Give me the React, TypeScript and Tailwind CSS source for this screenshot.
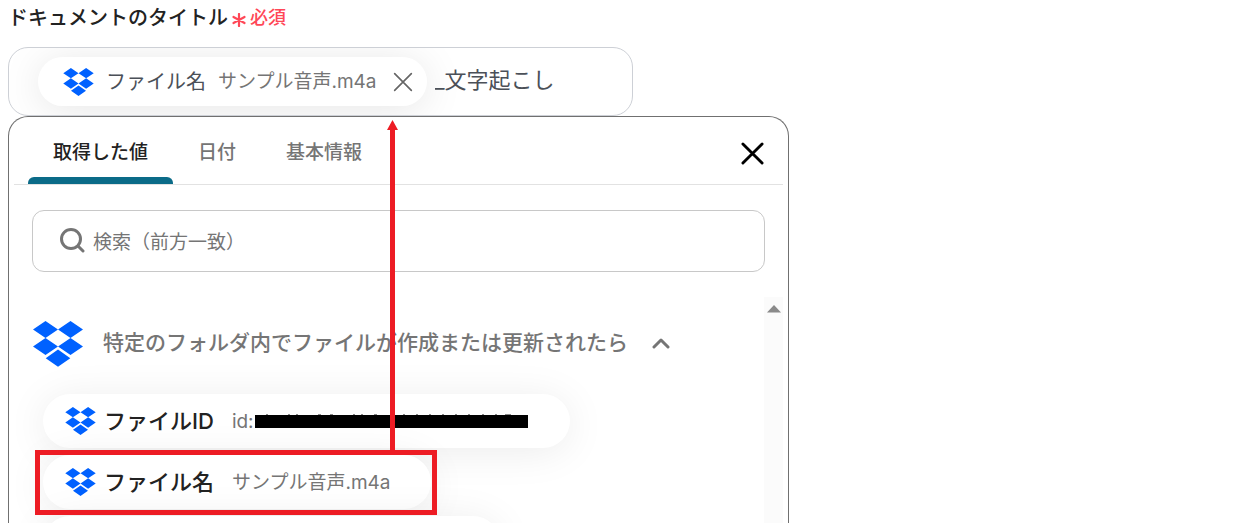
import { useState } from "react";

function DropboxIcon({ className }: { className: string }) {
  return (
    <svg viewBox="0 0 50 46" className={className} fill="#0061ff" aria-hidden="true">
      <path d="M12.5 0 25 8.5 12.5 17 0 8.5ZM37.5 0 50 8.5 37.5 17 25 8.5ZM12.5 17 25 25.5 12.5 34 0 25.5ZM37.5 17 50 25.5 37.5 34 25 25.5ZM25 28.6 37.3 37.2 25 45.8 12.7 37.2Z" />
    </svg>
  );
}

function CrossIcon({ className, stroke }: { className: string; stroke: number }) {
  return (
    <svg viewBox="0 0 24 24" className={className} fill="none" stroke="currentColor" strokeWidth={stroke} strokeLinecap="round" aria-hidden="true">
      <path d="M2 2 22 22M22 2 2 22" />
    </svg>
  );
}

const tabs = ["取得した値", "日付", "基本情報"];

export default function App() {
  const [active, setActive] = useState(0);
  const [suffix, setSuffix] = useState("_文字起こし");

  return (
    <main className="flex h-screen flex-col overflow-hidden bg-white px-2 font-['Inter','Noto_Sans_CJK_JP',sans-serif] text-[#757575]">
      <div className="flex h-[47px] shrink-0 items-start gap-1 pt-1">
        <label htmlFor="title" className="text-[20px] leading-7 font-medium text-[#222]">
          ドキュメントのタイトル
        </label>
        <span className="flex items-center gap-1 text-[18px] leading-7 font-medium text-[#ff4757]">
          <svg viewBox="0 0 14 14" className="mt-1 h-[14px] w-[14px]" fill="none" stroke="currentColor" strokeWidth="2.2" strokeLinecap="round" aria-hidden="true">
            <path d="M7 1V13M1.5 4 12.5 10M12.5 4 1.5 10" />
          </svg>
          必須
        </span>
      </div>

      <div className="flex h-[69px] w-full max-w-[625px] shrink-0 items-center gap-2 overflow-hidden rounded-[20px] border border-[#cdd0d6] pl-[29px]">
        <div className="flex h-[49px] shrink-0 items-center rounded-full bg-white pr-[14px] pl-[25px] shadow-[0_4px_40px_rgba(0,0,0,0.1)]">
          <DropboxIcon className="h-[28px] w-[31px]" />
          <span className="ml-3 text-[20px] leading-8 text-[#4b5058]">ファイル名</span>
          <span className="ml-3 text-[19px] leading-8">サンプル音声.m4a</span>
          <button type="button" aria-label="削除" className="ml-4 text-[#666]">
            <CrossIcon className="h-[20px] w-[20px]" stroke={2} />
          </button>
        </div>
        <input id="title" value={suffix} onChange={(e) => setSuffix(e.target.value)} className="min-w-0 flex-1 bg-transparent pb-[3px] text-[22px] text-[#4b5058] outline-none" />
      </div>

      <section className="relative flex min-h-0 w-full max-w-[781px] flex-1 flex-col rounded-t-[20px] border border-b-0 border-[#707070] px-[5px]">
        <div className="flex h-[68px] shrink-0 items-stretch justify-between border-b border-[#e2e2e2] pr-[19px] pl-[14px]">
          <div role="tablist" className="flex">
            {tabs.map((tab, i) => (
              <button
                key={tab}
                type="button"
                role="tab"
                aria-selected={active === i}
                onClick={() => setActive(i)}
                className={`relative px-[25px] pt-1 text-[19px] leading-7 font-medium ${active === i ? "text-[#222]" : ""}`}
              >
                {tab}
                {active === i && <span className="absolute inset-x-0 bottom-0 h-[7px] rounded-t-md bg-[#0b6b88]" />}
              </button>
            ))}
          </div>
          <button type="button" aria-label="閉じる" className="pt-[6px] text-black">
            <CrossIcon className="h-[23px] w-[23px]" stroke={3} />
          </button>
        </div>

        <label className="mx-[18px] mt-[25px] flex h-[62px] shrink-0 items-center gap-2 rounded-xl border border-[#c8c8c8] pl-[26px]">
          <svg viewBox="0 0 26 26" className="h-[26px] w-[26px] shrink-0" fill="none" stroke="currentColor" strokeWidth="3" strokeLinecap="round" aria-hidden="true">
            <circle cx="12" cy="11" r="9.5" />
            <path d="M19 18 24 23" />
          </svg>
          <input type="search" placeholder="検索（前方一致）" aria-label="検索（前方一致）" className="min-w-0 flex-1 pt-1 text-[19px] outline-none placeholder:text-[#757575]" />
        </label>

        <div className="mt-[25px] flex min-h-0 flex-1">
          <div className="min-w-0 flex-1 overflow-hidden pt-6 pl-[19px]">
            <button type="button" className="flex h-[46px] items-center text-left">
              <DropboxIcon className="h-[46px] w-[50px]" />
              <span className="ml-5 pb-[2px] text-[21px] leading-8 font-medium">特定のフォルダ内でファイルが作成または更新されたら</span>
              <svg viewBox="0 0 18 12" className="ml-6 h-[12px] w-[18px]" fill="none" stroke="currentColor" strokeWidth="3" strokeLinecap="round" strokeLinejoin="round" aria-hidden="true">
                <path d="M2 9 9 2 16 9" />
              </svg>
            </button>
            <ul className="mt-[27px] ml-[10px] flex flex-col items-start gap-[7px]">
              <li>
                <button type="button" className="flex h-[54px] w-[527px] items-center rounded-full bg-white pl-[22px] shadow-[0_4px_40px_rgba(0,0,0,0.08)]">
                  <DropboxIcon className="h-[28px] w-[31px]" />
                  <span className="ml-2 text-[22px] leading-8 font-medium text-[#222]">ファイルID</span>
                  <span className="ml-[18px] pt-px text-[19px] leading-8">id:</span>
                  <svg viewBox="0 0 274 17" className="h-[17px] w-[274px]" aria-hidden="true">
                    <path
                      d="M12 1.5h2M34 1.5h2M42 1.5h2M64 1.5h3M76 1.5h3M99 1.5h2M107 1.5h2M120 1.5h3M149 1.5h2M162 1.5h2M175 1.5h2M188 1.5h2M201 1.5h2M214 1.5h2M228 1.5h2M241 1.5h2M251 1.5h6"
                      stroke="#8a8a8a"
                    />
                    <path d="M1 2H274V15H1Z" />
                  </svg>
                </button>
              </li>
              <li>
                <button type="button" className="flex h-[54px] items-center rounded-full bg-white pr-10 pl-[22px] shadow-[0_4px_40px_rgba(0,0,0,0.08)]">
                  <DropboxIcon className="h-[28px] w-[31px]" />
                  <span className="ml-2 text-[22px] leading-8 font-medium text-[#222]">ファイル名</span>
                  <span className="ml-[18px] pt-px text-[19px] leading-8">サンプル音声.m4a</span>
                </button>
              </li>
              <li className="h-[54px] w-[457px] rounded-full bg-white shadow-[0_4px_40px_rgba(0,0,0,0.08)]" />
            </ul>
          </div>
          <div className="flex w-[19px] shrink-0 justify-center bg-[#fbfbfb] pt-2">
            <svg viewBox="0 0 14 8" className="h-[8px] w-[14px]" fill="#8a8a8a" aria-hidden="true">
              <path d="M0 7.5 7 0 14 7.5Z" />
            </svg>
          </div>
        </div>

        <div className="pointer-events-none absolute top-[333px] left-[26px] h-[65px] w-[402px] border-[5px] border-[#ed1c24]" />
        <svg viewBox="0 0 11 331" className="pointer-events-none absolute top-[3px] left-[378px] h-[331px] w-[11px]" fill="#ed1c24" aria-hidden="true">
          <path d="M5.5 0 11 10H8V331H3V10H0Z" />
        </svg>
      </section>
    </main>
  );
}
